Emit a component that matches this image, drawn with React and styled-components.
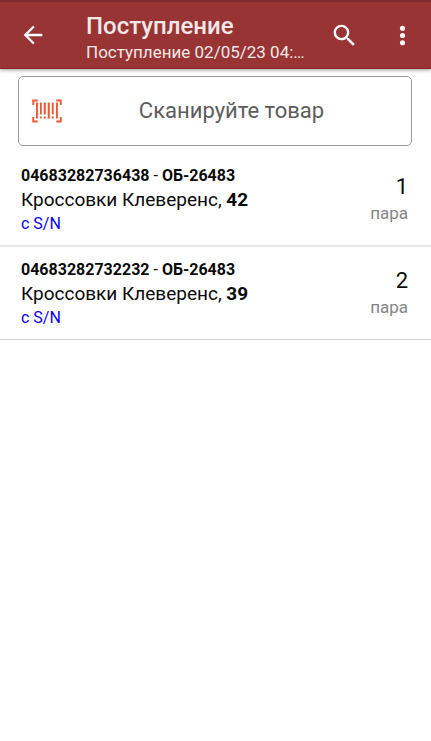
import React from "react";
import styled, { createGlobalStyle } from "styled-components";

const GlobalStyle = createGlobalStyle`
  *, *::before, *::after { box-sizing: border-box; }
  body {
    margin: 0;
    background: #fff;
    color: #0a0a0a;
    font-family: Roboto, "Noto Sans", sans-serif;
  }
`;

const Screen = styled.div`
  display: flex;
  flex-direction: column;
  min-height: 100vh;
`;

const AppBar = styled.header`
  display: flex;
  align-items: flex-start;
  padding: 10px 8px 4px 12px;
  border-top: 2px solid #7f2b2b;
  border-bottom: 1px solid #92201f;
  background: #993434;
  box-shadow: 0 1px 4px rgba(0, 0, 0, 0.4);
`;

const IconButton = styled.button`
  display: flex;
  align-items: center;
  justify-content: center;
  flex: none;
  width: 42px;
  height: 46px;
  padding: 0;
  border: 0;
  background: none;
  color: #fff;
  cursor: pointer;
`;

const BarTitles = styled.div`
  flex: 1;
  min-width: 0;
  margin-left: 32px;
`;

const Title = styled.h1`
  margin: 0;
  color: #f3e8e8;
  font-size: 24px;
  font-weight: 500;
  line-height: 28px;
`;

const Subtitle = styled.p`
  margin: 0;
  overflow: hidden;
  color: #f3e8e8;
  font-size: 17px;
  line-height: 24px;
  text-overflow: ellipsis;
  white-space: nowrap;
`;

const BarActions = styled.div`
  display: flex;
  gap: 16px;
  margin-left: 16px;
`;

const ScanButton = styled.button`
  display: flex;
  align-items: center;
  height: 70px;
  margin: 7px 19px 0 18px;
  padding: 0 10px 0 13px;
  border: 1px solid #999;
  border-radius: 5px;
  background: #fff;
  color: #5c5c5c;
  font-family: inherit;
  font-size: 22px;
  line-height: 28px;
  cursor: pointer;
`;

const ScanLabel = styled.span`
  flex: 1;
  text-align: center;
`;

const ItemList = styled.ul`
  margin: 7px 0 0;
  padding: 0;
  list-style: none;
`;

const Item = styled.li`
  display: flex;
  justify-content: space-between;
  padding: 11px 23px 10px 21px;
  border-bottom: 2px solid #e6e6e6;

  &:last-child {
    border-bottom: 1px solid #d6d6d6;
  }
`;

const Code = styled.div`
  font-size: 16px;
  line-height: 24px;
`;

const Name = styled.div`
  font-size: 19px;
  line-height: 24px;
`;

const Serial = styled.div`
  color: #0a00f5;
  font-size: 16px;
  line-height: 23px;
`;

const Amount = styled.div`
  padding-top: 9px;
  text-align: right;
`;

const Count = styled.div`
  font-size: 22px;
  line-height: 28px;
`;

const Unit = styled.div`
  color: #858585;
  font-size: 17px;
  line-height: 24px;
`;

const BackIcon = () => (
  <svg width="28" height="28" viewBox="0 0 24 24" fill="currentColor" aria-hidden="true">
    <path d="M20 11H7.83l5.59-5.59L12 4l-8 8 8 8 1.41-1.41L7.83 13H20v-2z" />
  </svg>
);

const SearchIcon = () => (
  <svg width="29" height="29" viewBox="0 0 24 24" fill="currentColor" aria-hidden="true">
    <path d="M15.5 14h-.79l-.28-.27A6.47 6.47 0 0 0 16 9.5 6.5 6.5 0 1 0 9.5 16c1.61 0 3.09-.59 4.23-1.57l.27.28v.79l5 4.99L20.49 19l-4.99-5zm-6 0C7.01 14 5 11.99 5 9.5S7.01 5 9.5 5 14 7.01 14 9.5 11.99 14 9.5 14z" />
  </svg>
);

const MoreIcon = () => (
  <svg width="29" height="29" viewBox="0 0 24 24" fill="currentColor" aria-hidden="true">
    <circle cx="12" cy="6" r="2.1" />
    <circle cx="12" cy="12" r="2.1" />
    <circle cx="12" cy="18" r="2.1" />
  </svg>
);

const BarcodeIcon = () => (
  <svg width="30" height="24" viewBox="0 0 30 24" fill="#f2572f" aria-hidden="true">
    <path d="M0.3 0.5h5.400v1.900h-3.500v3.700h-1.900zM24.300 0.500h5.400v5.600h-1.900v-3.700h-3.500zM0.300 18h1.900v3.600h3.500v1.900h-5.400zM27.800 18h1.900v5.500h-5.400v-1.900h3.500z" />
    <path d="M4 3.500h1.900v16h-1.900zM8 3.500h1.800v12h-1.800zM11.700 3.500h2.100v12h-2.100zM15.700 3.500h2.100v16h-2.100zM19.800 3.500h1.900v12h-1.900zM24 3.500h1.900v16h-1.900z" />
    <path d="M8 17.500h1.800v2h-1.800zM11.700 17.500h2.100v2h-2.100zM19.800 17.500h1.900v2h-1.900z" />
  </svg>
);

const items = [
  { barcode: "04683282736438", article: "ОБ-26483", name: "Кроссовки Клеверенс,", size: "42", count: 1 },
  { barcode: "04683282732232", article: "ОБ-26483", name: "Кроссовки Клеверенс,", size: "39", count: 2 },
];

export default function App() {
  return (
    <>
      <GlobalStyle />
      <Screen>
        <AppBar>
          <IconButton aria-label="Назад"><BackIcon /></IconButton>
          <BarTitles>
            <Title>Поступление</Title>
            <Subtitle>Поступление 02/05/23 04:…</Subtitle>
          </BarTitles>
          <BarActions>
            <IconButton aria-label="Поиск"><SearchIcon /></IconButton>
            <IconButton aria-label="Меню"><MoreIcon /></IconButton>
          </BarActions>
        </AppBar>
        <ScanButton>
          <BarcodeIcon />
          <ScanLabel>Сканируйте товар</ScanLabel>
        </ScanButton>
        <ItemList>
          {items.map((item) => (
            <Item key={item.barcode}>
              <div>
                <Code><b>{item.barcode}</b> - <b>{item.article}</b></Code>
                <Name>{item.name} <b>{item.size}</b></Name>
                <Serial>с S/N</Serial>
              </div>
              <Amount>
                <Count>{item.count}</Count>
                <Unit>пара</Unit>
              </Amount>
            </Item>
          ))}
        </ItemList>
      </Screen>
    </>
  );
}
